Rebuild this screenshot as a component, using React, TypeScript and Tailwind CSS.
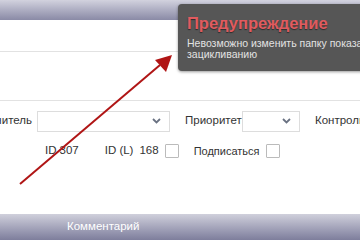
import React from 'react';

const Chevron = () => (
  <svg width="9" height="6" viewBox="0 0 9 6" className="text-gray-500">
    <path d="M1 1l3.5 3.5L8 1" fill="none" stroke="currentColor" strokeWidth="1.8" />
  </svg>
);

export default function App() {
  return (
    <div className="relative w-[360px] h-[240px] overflow-hidden bg-white text-[11.5px] text-[#333] font-['Liberation_Sans',Arial,sans-serif]">
      <div className="flex flex-col h-full">
        <div className="h-[20px] bg-gradient-to-b from-[#d2d2de] to-[#8a8aa6]" />
        <div className="h-[32px] border-b border-[#e2e2e2]" />
        <div className="h-[49px] border-b border-[#e2e2e2]" />

        <div className="flex items-center h-[40px]">
          <div className="w-[37px] overflow-hidden whitespace-nowrap flex justify-end pr-[5px] shrink-0">
            <span>нитель</span>
          </div>
          <div className="w-[133px] h-[21px] border border-[#ddd] flex items-center justify-end pr-[8px] shrink-0">
            <Chevron />
          </div>
          <span className="ml-[15px] w-[57px] shrink-0">Приоритет</span>
          <div className="w-[58px] h-[21px] border border-[#ddd] flex items-center justify-end pr-[8px] shrink-0">
            <Chevron />
          </div>
          <span className="ml-[15px] whitespace-nowrap">Контроль</span>
        </div>

        <div className="flex items-center h-[20px] pl-[45px]">
          <span>ID</span>
          <span className="ml-[3px]">307</span>
          <span className="ml-[26px]">ID (L)</span>
          <span className="ml-[6px]">168</span>
          <span className="ml-[6px] w-[14px] h-[14px] border border-[#bbb] rounded-[1px] shrink-0" />
          <span className="ml-[15px] text-[11px]">Подписаться</span>
          <span className="ml-[6px] w-[14px] h-[14px] border border-[#bbb] rounded-[1px] shrink-0" />
        </div>

        <div className="flex-1" />

        <div className="h-[26px] flex items-center pl-[67px] text-[11.5px] text-white bg-gradient-to-b from-[#d0d0dc] to-[#7e7e9c]">
          Комментарий
        </div>
      </div>

      <div className="absolute left-[178px] top-[4px] w-[200px] h-[67px] rounded-[4px] bg-[#565656] px-[9px] pt-[9px] shadow-[0_1px_3px_rgba(0,0,0,0.4)]">
        <div className="text-[16.5px] font-bold text-[#e05b5f] leading-[20px] [text-shadow:0_1px_1px_rgba(0,0,0,0.5)]">Предупреждение</div>
        <div className="mt-[5px] text-[10.5px] leading-[11px] text-[#e2e2e2] whitespace-nowrap">
          Невозможно изменить папку показа
          <br />
          зацикливанию
        </div>
      </div>

      <svg className="absolute left-0 top-0" width="360" height="240">
        <line x1="20" y1="184" x2="160" y2="65" stroke="#b01515" strokeWidth="2" />
        <polygon points="172,55 155,60 166,72" fill="#b01515" />
      </svg>
    </div>
  );
}
